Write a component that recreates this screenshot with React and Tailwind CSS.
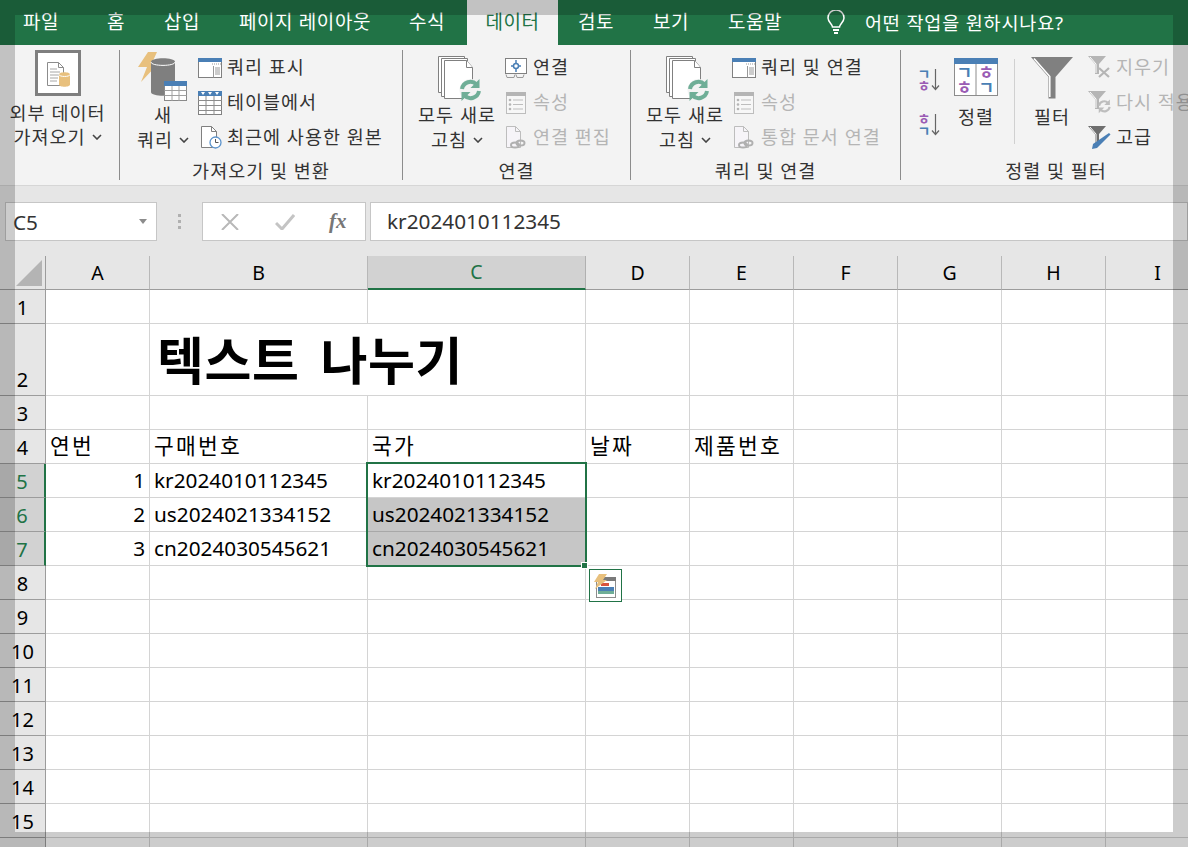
import React from "react";

const TXT = "text-[#333333]";
const OFF = "text-[#b5b5b5]";

function Chevron() {
  return (
    <svg width="10" height="6" viewBox="0 0 10 6" className="ml-[6px] shrink-0">
      <path d="M1 1l4 4 4-4" fill="none" stroke="#444" strokeWidth="1.6" />
    </svg>
  );
}

function ExternalIcon() {
  return (
    <div className="w-[46px] h-[46px] border-[3px] border-[#7f7f7f] bg-white flex items-center justify-center">
      <svg width="28" height="28" viewBox="0 0 28 28">
        <path d="M3.500 3.500h11l5 5v18h-16z" fill="#fff" stroke="#8c8c8c" />
        <path d="M14.500 3.500v5h5" fill="none" stroke="#8c8c8c" />
        <path d="M6 10h7M6 13h10M6 16h10M6 19h8M6 22h7" stroke="#a6a6a6" />
        <path d="M15 15.500c0-3 11-3 11 0v10c0 3-11 3-11 0z" fill="#e8c07d" />
        <path d="M15 15.500c0 2.600 11 2.600 11 0" fill="none" stroke="#fff" />
      </svg>
    </div>
  );
}

function NewQueryIcon() {
  return (
    <svg width="50" height="50" viewBox="0 0 50 50">
      <path d="M10 0h9l-6 13h6L3 30l6-15H0z" fill="#e8c07d" />
      <path d="M13 10c0-5 24-5 24 0v30c0 5-24 5-24 0z" fill="#7f7f7f" />
      <path d="M13 10c0 4.500 24 4.500 24 0" fill="none" stroke="#fff" />
      <rect x="26.500" y="29.500" width="22" height="19" fill="#fff" stroke="#8a8a8a" />
      <rect x="26" y="29" width="23" height="5" fill="#4a7fb5" />
      <path d="M26.500 38.500h22M26.500 43.500h22M34 34v15M41 34v15" stroke="#a0a0a0" />
    </svg>
  );
}

function QueryIcon() {
  return (
    <svg width="24" height="20" viewBox="0 0 24 20">
      <rect x="0.500" y="0.500" width="23" height="19" fill="#fff" stroke="#808080" />
      <rect width="24" height="4" fill="#4a7fb5" />
      <path d="M14 6h1M16 6h1M18 6h1M20 6h1M22 6h1" stroke="#999" />
      <path d="M15.500 8v11.500M17 10h5M17 12h5M17 14h5M17 16h5" stroke="#999" />
    </svg>
  );
}

function TableIcon() {
  return (
    <svg width="24" height="24" viewBox="0 0 24 24">
      <rect x="0.500" y="0.500" width="23" height="23" fill="#fff" stroke="#808080" />
      <rect width="24" height="5" fill="#4a7fb5" />
      <path d="M3 1h4L5 4zM10 1h4l-2 3zM17 1h4l-2 3z" fill="#fff" />
      <path d="M0 9.500h24M0 14.500h24M0 19.500h24M8 5v19M16 5v19" stroke="#8c8c8c" />
    </svg>
  );
}

function RecentIcon() {
  return (
    <svg width="22" height="23" viewBox="0 0 22 23">
      <path d="M1.500 .5h10l5 5v16h-15z" fill="#fff" stroke="#808080" />
      <path d="M11.500 .5v5h5" fill="none" stroke="#808080" />
      <circle cx="15.500" cy="16.500" r="5.500" fill="#fff" stroke="#5b93cc" strokeWidth="1.300" />
      <path d="M15.500 13v3.500h3" fill="none" stroke="#555" />
    </svg>
  );
}

function RefreshArcs({ color = "#6fae97", w = 4 }) {
  return (
    <g fill="none" stroke={color} strokeWidth={w}>
      <path d="M2.500 10a8.500 8.500 0 0 1 14.500-4.500" />
      <path d="M19.500 12a8.500 8.500 0 0 1-14.500 4.500" />
      <path d="M20 0v9h-9z" fill={color} stroke="none" />
      <path d="M2 22v-9h9z" fill={color} stroke="none" />
    </g>
  );
}

function RefreshAllIcon() {
  return (
    <svg width="46" height="46" viewBox="0 0 46 46" className="ml-[7px]">
      <path d="M.5 .5h26v36h-26z" fill="#fff" stroke="#808080" />
      <path d="M3.500 2.500h26v38h-26z" fill="#fff" stroke="#808080" />
      <path d="M6.500 4.500h22l6 7v31h-28z" fill="#fff" stroke="#808080" />
      <path d="M28.500 4.500v7h6" fill="#fff" stroke="#808080" />
      <g transform="translate(21.500 23)">
        <circle cx="11" cy="11" r="11" fill="#f3f3f3" />
        <RefreshArcs />
      </g>
    </svg>
  );
}

function ConnectIcon() {
  return (
    <svg width="22" height="20" viewBox="0 0 22 20">
      <rect x="0.500" y="0.500" width="21" height="15" fill="#fff" stroke="#808080" />
      <path d="M1 16.500l1 3h7l1-3M11 16.500l1 3h6l1-3" fill="none" stroke="#999" />
      <path d="M11 2v3M11 11v3M6 8h3M13 8h3" stroke="#4a7fb5" strokeWidth="1.500" />
      <circle cx="11" cy="8" r="2.500" fill="#fff" stroke="#4a7fb5" strokeWidth="1.500" />
    </svg>
  );
}

function PropsIcon() {
  return (
    <svg width="20" height="22" viewBox="0 0 20 22">
      <rect x="0.500" y="0.500" width="19" height="21" fill="#f7f7f7" stroke="#bdbdbd" />
      <rect width="20" height="4" fill="#b5b5b5" />
      <path d="M7 8h10M7 12.500h10M7 17h10" stroke="#bdbdbd" />
      <circle cx="4" cy="8" r="1.300" fill="#b5b5b5" />
      <circle cx="4" cy="12.500" r="1.300" fill="#b5b5b5" />
      <circle cx="4" cy="17" r="1.300" fill="#b5b5b5" />
    </svg>
  );
}

function LinkDocIcon() {
  return (
    <svg width="20" height="23" viewBox="0 0 20 23">
      <path d="M.5 .5h9l5 5v16h-14z" fill="#f6f4f8" stroke="#bdbdbd" />
      <path d="M9.500 .5v5h5" fill="none" stroke="#bdbdbd" />
      <g fill="none" stroke="#b0b0b0" strokeWidth="2">
        <ellipse cx="9" cy="19" rx="4" ry="2.500" />
        <ellipse cx="14.500" cy="17" rx="4" ry="2.500" />
      </g>
    </svg>
  );
}

function SortSmall({ down }) {
  const a = down ? "ㄱ" : "ㅎ";
  const b = down ? "ㅎ" : "ㄱ";
  const ca = down ? "#4a7fb5" : "#9a5cb4";
  const cb = down ? "#9a5cb4" : "#4a7fb5";
  return (
    <svg width="22" height="24" viewBox="0 0 22 24" className="overflow-visible">
      <text x="-1.500" y="10.500" fontSize="14" fontWeight="700" fill={ca} fontFamily="Noto Sans CJK KR">{a}</text>
      <text x="-1.500" y="22.500" fontSize="14" fontWeight="700" fill={cb} fontFamily="Noto Sans CJK KR">{b}</text>
      <path d="M16.500 1v20M13 17.500l3.500 4 3.500-4" fill="none" stroke="#666" strokeWidth="1.200" />
    </svg>
  );
}

function SortBig() {
  return (
    <svg width="44" height="38" viewBox="0 0 44 38">
      <rect x="0.500" y="0.500" width="43" height="37" fill="#fff" stroke="#8c8c8c" />
      <rect width="44" height="6" fill="#4a7fb5" />
      <path d="M22 6v32" stroke="#8c8c8c" />
      <text x="2.500" y="21" fontSize="17" fontWeight="700" fill="#4a7fb5" fontFamily="Noto Sans CJK KR">ㄱ</text>
      <text x="2.500" y="35.500" fontSize="17" fontWeight="700" fill="#9a5cb4" fontFamily="Noto Sans CJK KR">ㅎ</text>
      <text x="24.500" y="21" fontSize="17" fontWeight="700" fill="#9a5cb4" fontFamily="Noto Sans CJK KR">ㅎ</text>
      <text x="24.500" y="35.500" fontSize="17" fontWeight="700" fill="#4a7fb5" fontFamily="Noto Sans CJK KR">ㄱ</text>
    </svg>
  );
}

function FunnelBig() {
  return (
    <svg width="42" height="42" viewBox="0 0 42 42">
      <path d="M0 0h42L24.500 20v21.500h-7V20z" fill="#808080" />
      <path d="M3 1.500L18.800 19.500V40" fill="none" stroke="#fff" strokeWidth="1.500" />
    </svg>
  );
}

function FunnelSmall({ color }) {
  return (
    <g>
      <path d="M0 0h18l-7 8v10h-4V8z" fill={color} />
      <path d="M2 1l6 7v9" fill="none" stroke="#fff" />
    </g>
  );
}

function ClearIcon() {
  return (
    <svg width="23" height="23" viewBox="0 0 23 23">
      <FunnelSmall color="#b5b5b5" />
      <path d="M11 12l10 9M21 12l-10 9" stroke="#b5b5b5" strokeWidth="2.200" />
    </svg>
  );
}

function ReapplyIcon() {
  return (
    <svg width="23" height="23" viewBox="0 0 23 23">
      <FunnelSmall color="#b5b5b5" />
      <g transform="translate(9.500 8.500) scale(.62)">
        <RefreshArcs color="#bdbdbd" w={3.500} />
      </g>
    </svg>
  );
}

function AdvancedIcon() {
  return (
    <svg width="23" height="23" viewBox="0 0 23 23">
      <FunnelSmall color="#6e6e6e" />
      <path d="M21 7l1.500 1.500L9 22l-5 1 1-5z" fill="#4a7fb5" />
    </svg>
  );
}

function Bulb() {
  return (
    <svg width="20" height="25" viewBox="0 0 20 25" className="shrink-0">
      <path d="M6.500 17c0-3-4.500-5-4.500-9a8 8 0 0 1 16 0c0 4-4.500 6-4.500 9z" fill="none" stroke="#fff" strokeWidth="1.500" />
      <path d="M7 20h6M8 23h4" stroke="#fff" strokeWidth="1.800" />
    </svg>
  );
}

function FlashIcon() {
  return (
    <svg width="24" height="24" viewBox="0 0 24 24">
      <rect x="2.500" y="5.500" width="19" height="18" fill="#fff" stroke="#8c8c8c" />
      <rect x="7" y="3" width="15" height="4" fill="#7a7a7a" />
      <rect x="7" y="9" width="8" height="3" fill="#d9543c" />
      <rect x="4" y="13" width="16" height="4" fill="#4a7fb5" />
      <rect x="4" y="17" width="16" height="3" fill="#6fae97" />
      <path d="M5 0h8L9 6h4L1 15l3-7H0z" fill="#e8c07d" />
    </svg>
  );
}

function Tab({ className, children }) {
  return <div className={"shrink-0 text-center " + className}>{children}</div>;
}

function SmallRow({ icon, iconW, label, off }) {
  return (
    <div className="h-[35px] flex items-center whitespace-nowrap">
      <div className={"shrink-0 flex justify-center " + iconW}>{icon}</div>
      <span className={"text-[18.500px] tracking-[1px] -mt-[2px] " + (off ? OFF : TXT)}>{label}</span>
    </div>
  );
}

function LargeBtn({ className, icon, l1, l2 }) {
  return (
    <div className={"shrink-0 flex flex-col items-center " + className}>
      <div className="h-[52px] flex items-end justify-center">{icon}</div>
      <div className={"h-[25px] leading-[25px] text-[18.500px] tracking-[1px] whitespace-nowrap " + TXT}>{l1}</div>
      <div className={"h-[25px] leading-[25px] text-[18.500px] tracking-[1px] whitespace-nowrap flex items-center " + TXT}>
        {l2}
        <Chevron />
      </div>
    </div>
  );
}

function Group({ className, label, children }) {
  return (
    <div className={"shrink-0 h-[130px] flex flex-col " + className}>
      <div className="h-[112px] flex">{children}</div>
      <div className={"h-[18px] leading-[18px] text-[18.500px] tracking-[1px] text-center whitespace-nowrap " + TXT}>{label}</div>
    </div>
  );
}

function Ribbon() {
  return (
    <div className="h-[141px] bg-[#f3f3f3] border-b border-[#d6d6d6] pt-[5px] flex overflow-hidden">
      <Group className="w-[120px] border-r border-[#8c8c8c] pr-[4px]" label="">
        <div className={"w-full flex flex-col items-center text-[18.500px] tracking-[1px] " + TXT}>
          <div className="h-[51px] flex items-start"><ExternalIcon /></div>
          <div className="h-[24px] leading-[24px] whitespace-nowrap">외부 데이터</div>
          <div className="h-[24px] leading-[24px] whitespace-nowrap flex items-center">가져오기<Chevron /></div>
        </div>
      </Group>

      <Group className="w-[283px] border-r border-[#8c8c8c]" label="가져오기 및 변환">
        <LargeBtn className="w-[62px] ml-[12px]" icon={<NewQueryIcon />} l1="새" l2="쿼리" />
        <div className="ml-[4px]">
          <SmallRow iconW="w-[29px] pr-[5px]" icon={<QueryIcon />} label="쿼리 표시" />
          <SmallRow iconW="w-[29px] pr-[5px]" icon={<TableIcon />} label="테이블에서" />
          <SmallRow iconW="w-[29px] pl-[2px] pr-[5px]" icon={<RecentIcon />} label="최근에 사용한 원본" />
        </div>
      </Group>

      <Group className="w-[228px] border-r border-[#8c8c8c]" label="연결">
        <LargeBtn className="w-[90px] ml-[9px]" icon={<RefreshAllIcon />} l1="모두 새로" l2="고침" />
        <div className="ml-[3px]">
          <SmallRow iconW="w-[28px] pr-[6px]" icon={<ConnectIcon />} label="연결" />
          <SmallRow iconW="w-[28px] pr-[6px]" icon={<PropsIcon />} label="속성" off />
          <SmallRow iconW="w-[28px] pr-[6px]" icon={<LinkDocIcon />} label="연결 편집" off />
        </div>
      </Group>

      <Group className="w-[270px] border-r border-[#8c8c8c]" label="쿼리 및 연결">
        <LargeBtn className="w-[90px] ml-[9px]" icon={<RefreshAllIcon />} l1="모두 새로" l2="고침" />
        <div className="ml-[2px]">
          <SmallRow iconW="w-[29px] pr-[5px]" icon={<QueryIcon />} label="쿼리 및 연결" />
          <SmallRow iconW="w-[29px] pr-[5px]" icon={<PropsIcon />} label="속성" off />
          <SmallRow iconW="w-[29px] pr-[5px]" icon={<LinkDocIcon />} label="통합 문서 연결" off />
        </div>
      </Group>

      <Group className="w-[310px]" label="정렬 및 필터">
        <div className="ml-[18px] w-[22px] pt-[18px] flex flex-col gap-[21px]">
          <SortSmall down />
          <SortSmall />
        </div>
        <div className="ml-[13px] w-[44px] pt-[8px] flex flex-col items-center">
          <SortBig />
          <div className={"mt-[8px] text-[18.500px] tracking-[1px] leading-[25px] " + TXT}>정렬</div>
        </div>
        <div className="ml-[16px] w-px h-[85px] mt-[9px] bg-[#d0d0d0]" />
        <div className="ml-[16px] w-[42px] pt-[7px] flex flex-col items-center">
          <FunnelBig />
          <div className={"mt-[5px] text-[18.500px] tracking-[1px] leading-[25px] whitespace-nowrap " + TXT}>필터</div>
        </div>
        <div className="ml-[15px]">
          <SmallRow iconW="w-[28px] pr-[5px]" icon={<ClearIcon />} label="지우기" off />
          <SmallRow iconW="w-[28px] pr-[5px]" icon={<ReapplyIcon />} label="다시 적용" off />
          <SmallRow iconW="w-[28px] pr-[5px]" icon={<AdvancedIcon />} label="고급" />
        </div>
      </Group>
    </div>
  );
}

function FormulaBar() {
  return (
    <div className="h-[70px] bg-[#e6e6e6] pt-[16px] flex items-start">
      <div className="ml-[5px] w-[152px] h-[39px] bg-white border border-[#c6c6c6] flex items-center justify-between pl-[7px] pr-[9px]">
        <span className="text-[20.750px] text-[#333] mt-[2px]">C5</span>
        <svg width="8" height="5" viewBox="0 0 8 5"><path d="M0 0h8L4 5z" fill="#8c8c8c" /></svg>
      </div>
      <div className="w-[45px] h-[39px] flex flex-col items-center justify-center gap-[3px]">
        <div className="w-[3px] h-[3px] bg-[#b0b0b0]" />
        <div className="w-[3px] h-[3px] bg-[#b0b0b0]" />
        <div className="w-[3px] h-[3px] bg-[#b0b0b0]" />
      </div>
      <div className="w-[164px] h-[39px] bg-white border border-[#c6c6c6] flex items-center pl-[18px]">
        <svg width="18" height="16" viewBox="0 0 18 16"><path d="M1 0l16 16M17 0L1 16" stroke="#b8b8b8" strokeWidth="2" /></svg>
        <svg width="20" height="16" viewBox="0 0 20 16" className="ml-[36px]"><path d="M1 9l6 6L19 1" fill="none" stroke="#c4c4c4" strokeWidth="3" /></svg>
        <span className="ml-[34px] font-['Liberation_Serif',serif] italic font-bold text-[21px] text-[#777]">fx</span>
      </div>
      <div className="ml-[4px] flex-1 h-[39px] bg-white border border-[#c6c6c6] flex items-center pl-[16px]">
        <span className="text-[20.750px] text-[#333]">kr2024010112345</span>
      </div>
    </div>
  );
}

const GRID = "grid grid-cols-[46px_104px_218px_218px_104px_104px_104px_104px_104px_104px]";
const COLS = ["A", "B", "C", "D", "E", "F", "G", "H", "I"];
const HEIGHTS = [34, 72, 34, 34, 34, 34, 34, 34, 34, 34, 34, 34, 34, 34, 34, 34];

const KO = "text-[21.500px] tracking-[2.200px] text-black";
const EN = "text-[20.750px] text-black";

const CELLS = {
  "4A": { t: "연번", c: KO },
  "4B": { t: "구매번호", c: KO },
  "4C": { t: "국가", c: KO },
  "4D": { t: "날짜", c: KO },
  "4E": { t: "제품번호", c: KO },
  "5A": { t: "1", c: EN + " justify-end" },
  "6A": { t: "2", c: EN + " justify-end" },
  "7A": { t: "3", c: EN + " justify-end" },
  "5B": { t: "kr2024010112345", c: EN },
  "6B": { t: "us2024021334152", c: EN },
  "7B": { t: "cn2024030545621", c: EN },
  "5C": { t: "kr2024010112345", c: EN },
  "6C": { t: "us2024021334152", c: EN + " bg-[#c6c6c6] border-b-[#a8a8a8]" },
  "7C": { t: "cn2024030545621", c: EN + " bg-[#c6c6c6]" },
};

function Sheet() {
  return (
    <div className="relative flex-1 overflow-hidden bg-white">
      <div className={GRID + " h-[34px]"}>
        <div className="bg-[#e6e6e6] border-r border-b border-[#9c9c9c] flex items-end justify-end pr-[3px] pb-[3px]">
          <svg width="26" height="26" viewBox="0 0 26 26"><path d="M26 0v26H0z" fill="#b4b4b4" /></svg>
        </div>
        {COLS.map((c) =>
          c === "C" ? (
            <div key={c} className="bg-[#d2d2d2] border-r border-[#b0b0b0] border-b-2 border-b-[#217346] flex items-center justify-center text-[19.500px] text-[#217346]">{c}</div>
          ) : (
            <div key={c} className="bg-[#e6e6e6] border-r border-[#b8b8b8] border-b border-b-[#9c9c9c] flex items-center justify-center text-[19.500px] text-black">{c}</div>
          )
        )}
      </div>
      {HEIGHTS.map((h, i) => {
        const r = i + 1;
        const sel = r >= 5 && r <= 7;
        return (
          <div key={r} className={GRID + (h === 72 ? " h-[72px]" : " h-[34px]")}>
            <div
              className={
                "border-b border-[#9c9c9c] flex items-end justify-center text-[20px] leading-[31px] " +
                (sel
                  ? "bg-[#d2d2d2] border-r-2 border-r-[#217346] text-[#217346]"
                  : "bg-[#e6e6e6] border-r border-r-[#9c9c9c] text-black")
              }
            >
              {r}
            </div>
            {COLS.map((c) => {
              const cell = CELLS[r + c];
              const noRight = r === 2 && c === "B";
              return (
                <div
                  key={c}
                  className={
                    "border-b border-[#d4d4d4] flex items-center px-[4px] whitespace-nowrap " +
                    (noRight ? "" : "border-r border-r-[#d4d4d4] ") +
                    (cell ? cell.c : "")
                  }
                >
                  {noRight ? (
                    <span className="ml-[3px] font-bold text-[51px] tracking-[0.600px] [word-spacing:7px] leading-[70px] text-black">텍스트 나누기</span>
                  ) : cell ? (
                    cell.t
                  ) : null}
                </div>
              );
            })}
          </div>
        );
      })}
      <div className="absolute left-[366px] top-[206px] w-[221px] h-[105px] border-2 border-[#217346]" />
      <div className="absolute left-[581px] top-[306px] w-[7px] h-[7px] bg-[#217346] border border-white" />
      <div className="absolute left-[589px] top-[313px] w-[33px] h-[33px] bg-white border border-[#217346] flex items-center justify-center">
        <FlashIcon />
      </div>
    </div>
  );
}

export default function App() {
  return (
    <div className="relative w-[1188px] h-[847px] overflow-hidden flex flex-col font-['Noto_Sans','Noto_Sans_CJK_KR',sans-serif]">
      <div className="h-[45px] bg-[#217346] flex items-center text-white text-[19px] tracking-[0.600px] shrink-0">
        <Tab className="ml-[6px] w-[70px]">파일</Tab>
        <Tab className="w-[80px]">홈</Tab>
        <Tab className="w-[52px]">삽입</Tab>
        <Tab className="w-[194px]">페이지 레이아웃</Tab>
        <Tab className="w-[50px]">수식</Tab>
        <Tab className="ml-[15px] w-[91px] h-[45px] leading-[45px] bg-[#f3f3f3] text-[#217346]">데이터</Tab>
        <Tab className="w-[76px]">검토</Tab>
        <Tab className="w-[74px]">보기</Tab>
        <Tab className="w-[94px]">도움말</Tab>
        <div className="ml-[24px] flex items-center gap-[19px]">
          <Bulb />
          <span className="text-[18.500px] tracking-[0.850px] whitespace-nowrap">어떤 작업을 원하시나요?</span>
        </div>
      </div>
      <Ribbon />
      <FormulaBar />
      <Sheet />
      <div className="absolute inset-0 border-[15px] border-black/20 pointer-events-none" />
    </div>
  );
}
